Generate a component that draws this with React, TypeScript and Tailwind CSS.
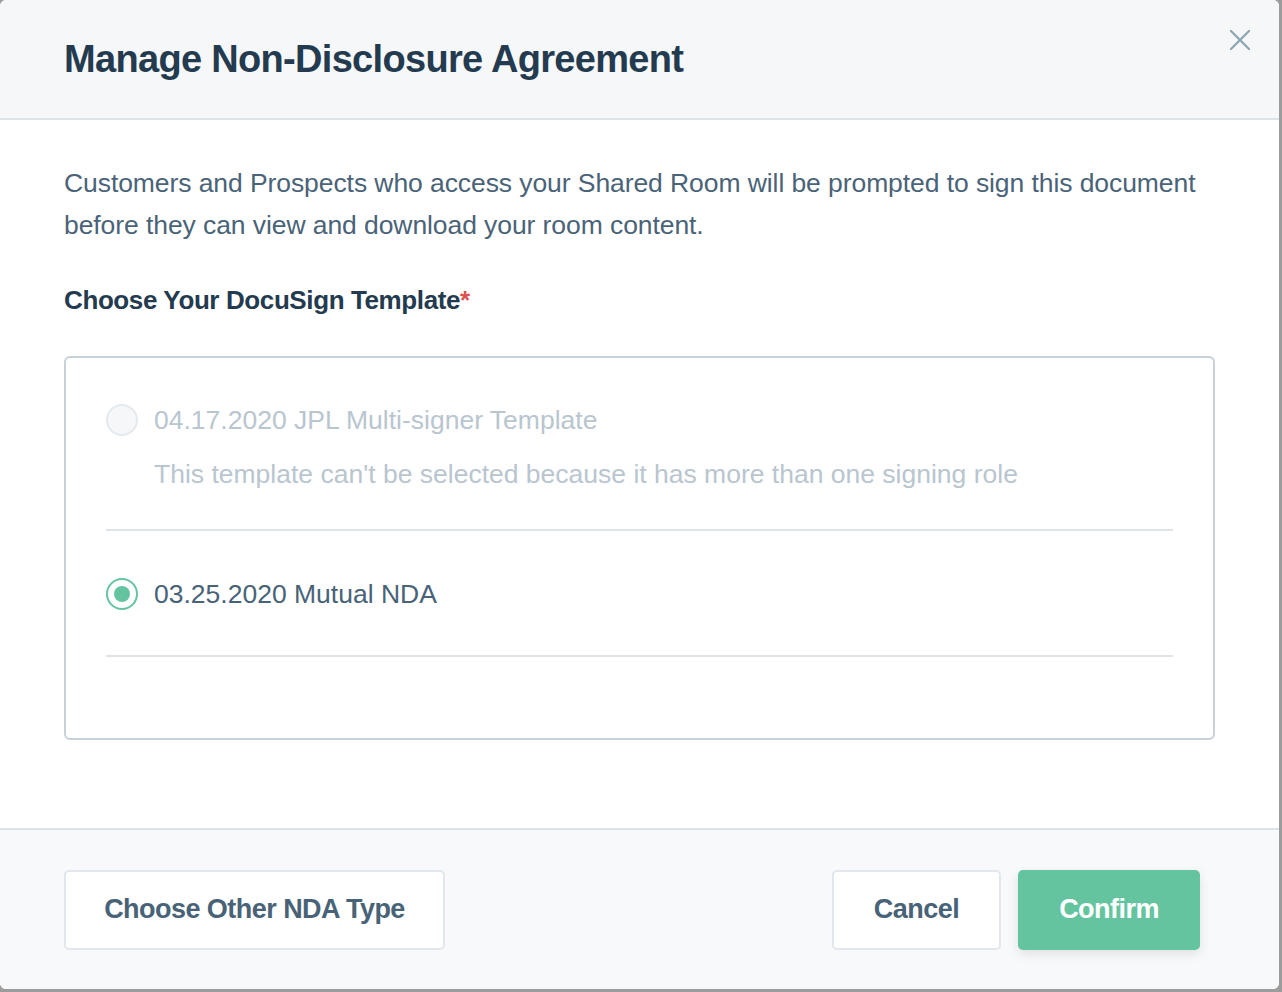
import React, { useState } from 'react';

type Template = {
  id: string;
  name: string;
  note?: string;
  disabled?: boolean;
};

const templates: Template[] = [
  {
    id: 'jpl',
    name: '04.17.2020 JPL Multi-signer Template',
    note: "This template can't be selected because it has more than one signing role",
    disabled: true,
  },
  { id: 'mutual', name: '03.25.2020 Mutual NDA' },
];

const Radio: React.FC<{ checked: boolean; disabled?: boolean }> = ({ checked, disabled }) => {
  if (disabled) {
    return <span className="mt-[4px] block w-[32px] h-[32px] shrink-0 rounded-full border-2 border-[#e4e9ee] bg-[#f5f7f9]" />;
  }
  return (
    <span
      className={
        checked
          ? 'mt-[4px] flex items-center justify-center w-[32px] h-[32px] shrink-0 rounded-full border-2 border-[#64c4a0] bg-white'
          : 'mt-[4px] block w-[32px] h-[32px] shrink-0 rounded-full border-2 border-[#c3ced7] bg-white'
      }
    >
      {checked && <span className="block w-[16px] h-[16px] rounded-full bg-[#64c4a0]" />}
    </span>
  );
};

export default function App() {
  const [selected, setSelected] = useState('mutual');

  return (
    <div
      className="w-[1282px] h-[992px] bg-[#9c9c9c]"
      style={{ fontFamily: '"Liberation Sans", Arial, sans-serif' }}
    >
      <div className="relative w-[1279px] h-[989px] bg-white rounded-[6px] overflow-hidden flex flex-col">
        <div className="h-[120px] shrink-0 bg-[#f5f7f9] border-b-2 border-[#dde2e7] flex items-center px-[64px]">
          <h1 className="text-[38px] font-bold tracking-[-0.018em] text-[#243b4f] leading-none">
            Manage Non-Disclosure Agreement
          </h1>
        </div>
        <button className="absolute top-[30px] right-[29px] w-[20px] h-[20px] text-[#8ca3b2]">
          <svg viewBox="0 0 20 20" width="20" height="20" fill="none" stroke="currentColor" strokeWidth="2.2" strokeLinecap="round">
            <path d="M1 1L19 19M19 1L1 19" />
          </svg>
        </button>

        <div className="flex-1 px-[64px] pt-[42px]">
          <p className="text-[26.5px] leading-[42px] tracking-[-0.003em] text-[#4a6378] whitespace-nowrap">
            Customers and Prospects who access your Shared Room will be prompted to sign this document
            <br />
            before they can view and download your room content.
          </p>
          <div className="mt-[33px] text-[26px] leading-[42px] font-bold tracking-[-0.015em] text-[#243b4f]">
            Choose Your DocuSign Template<span className="text-[#e05252]">*</span>
          </div>

          <div className="mt-[35px] w-[1151px] h-[384px] border-2 border-[#c6d1da] rounded-[6px] px-[40px] pt-[42px]">
            {templates.map((t, i) => (
              <div
                key={t.id}
                className={
                  i === 0
                    ? 'flex items-start gap-[16px] pb-[35px] border-b-2 border-[#dfe4e9] cursor-default'
                    : 'flex items-start gap-[16px] pt-[43px] pb-[41px] border-b-2 border-[#dfe4e9] cursor-pointer'
                }
                onClick={() => !t.disabled && setSelected(t.id)}
              >
                <Radio checked={selected === t.id} disabled={t.disabled} />
                <div className="flex flex-col">
                  <span
                    className={
                      t.disabled
                        ? 'text-[26.5px] leading-[40px] text-[#b9c5cf]'
                        : 'text-[26.5px] leading-[40px] text-[#486378]'
                    }
                  >
                    {t.name}
                  </span>
                  {t.note && (
                    <span className="mt-[14px] text-[26.5px] leading-[40px] text-[#b9c5cf]">{t.note}</span>
                  )}
                </div>
              </div>
            ))}
          </div>
        </div>

        <div className="h-[161px] shrink-0 bg-[#f7f9fb] border-t-2 border-[#dde2e7] flex items-center pl-[64px] pr-[79px]">
          <button className="w-[381px] h-[80px] bg-white border-2 border-[#e1e7ec] rounded-[5px] text-[27px] font-bold tracking-[-0.02em] text-[#486378]">
            Choose Other NDA Type
          </button>
          <div className="ml-auto flex gap-[17px]">
            <button className="w-[169px] h-[80px] bg-white border-2 border-[#e1e7ec] rounded-[5px] text-[27px] font-bold tracking-[-0.02em] text-[#486378]">
              Cancel
            </button>
            <button className="w-[182px] h-[80px] bg-[#65c4a0] rounded-[5px] text-[27px] font-bold tracking-[-0.02em] text-white shadow-[0_4px_12px_rgba(0,0,0,0.1)]">
              Confirm
            </button>
          </div>
        </div>
      </div>
    </div>
  );
}
